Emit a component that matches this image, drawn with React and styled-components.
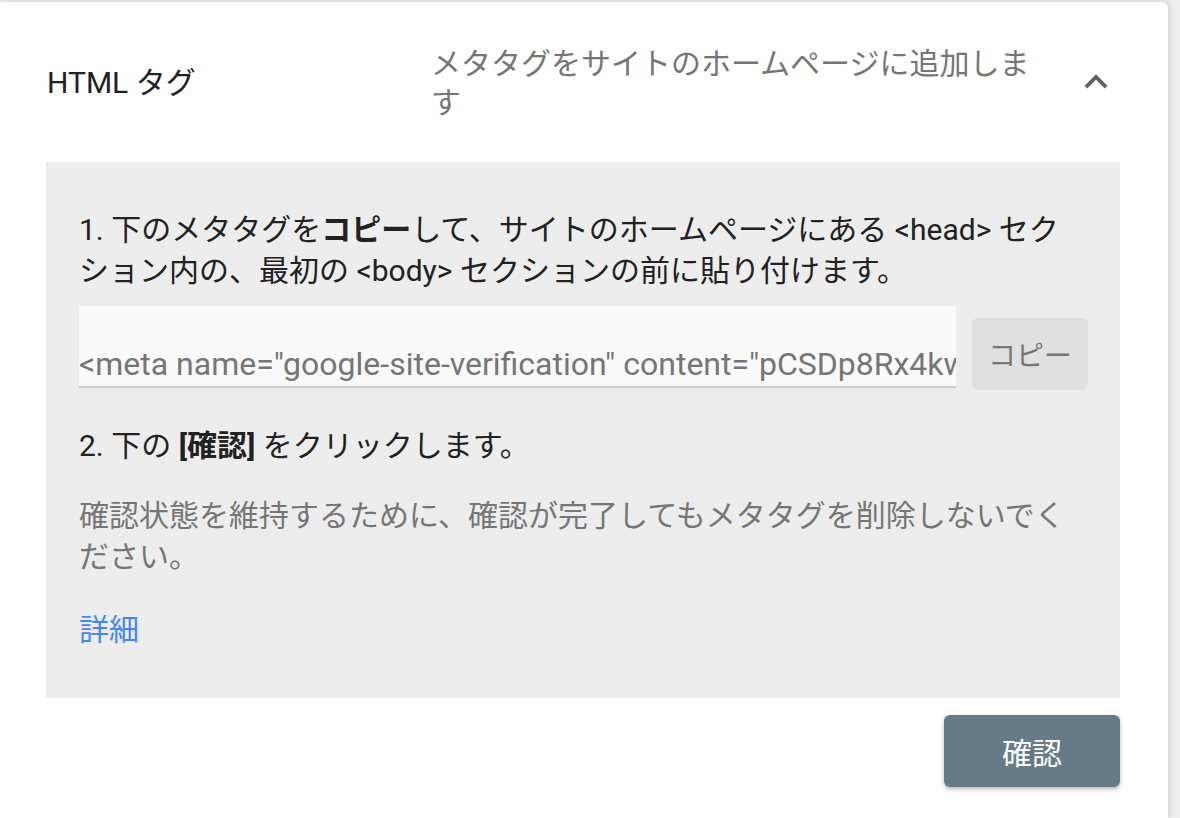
import React from "react";
import styled, { createGlobalStyle } from "styled-components";

const GlobalStyle = createGlobalStyle`
  body {
    margin: 0;
    background: #eeeeee;
    font-family: Roboto, "Noto Sans CJK JP", sans-serif;
  }
`;

const Page = styled.div`
  padding-top: 2px;
  height: 816px;
  overflow: hidden;
`;

const Card = styled.div`
  width: 1168px;
  min-height: 816px;
  background: #fff;
  border-radius: 0 6px 0 0;
  box-shadow: 1px 0 6px rgba(0, 0, 0, 0.14);
`;

const Header = styled.div`
  display: flex;
  align-items: center;
  min-height: 160px;
  padding: 0 49px 0 47px;
`;

const Label = styled.div`
  width: 384px;
  font-size: 30px;
  line-height: 41px;
  color: #212121;
`;

const Description = styled.div`
  width: 615px;
  padding-top: 2px;
  font-size: 30px;
  line-height: 39px;
  color: #757575;
`;

const Toggle = styled.button`
  margin-left: auto;
  width: 46px;
  height: 46px;
  padding: 0;
  border: none;
  background: none;
  color: #616161;
  display: flex;
`;

const Panel = styled.div`
  margin: 0 48px 0 46px;
  padding: 47px 32px 48px 33px;
  background: #ededed;
  font-size: 30px;
  line-height: 41px;
  color: #212121;
`;

const Step = styled.p`
  margin: ${(p) => p.$top || 0}px 0 0;
  max-width: 988px;
  color: ${(p) => (p.$muted ? "#757575" : "#212121")};
`;

const CopyRow = styled.div`
  display: flex;
  align-items: flex-end;
  gap: 16px;
  margin-top: 15px;
`;

const CodeField = styled.div`
  width: 877px;
  height: 82px;
  box-sizing: border-box;
  display: flex;
  align-items: flex-end;
  background: #f9f9f9;
  border-bottom: 2px solid #cccccc;
  overflow: hidden;
  white-space: nowrap;
  font-size: 32px;
  line-height: 43px;
  color: #757575;
`;

const CopyButton = styled.button`
  width: 116px;
  height: 72px;
  margin-bottom: -2px;
  border: none;
  border-radius: 6px;
  background: #e0e0e0;
  color: #757575;
  font-family: inherit;
  font-size: 28px;
`;

const Link = styled.a`
  display: inline-block;
  margin-top: 32px;
  color: #4285f4;
  text-decoration: none;
`;

const Footer = styled.div`
  display: flex;
  justify-content: flex-end;
  margin: 17px 48px 0 0;
`;

const ConfirmButton = styled.button`
  width: 176px;
  height: 72px;
  border: none;
  border-radius: 6px;
  background: #667a87;
  color: #fff;
  font-family: inherit;
  font-size: 30px;
  box-shadow: 0 2px 4px rgba(0, 0, 0, 0.3);
`;

function ChevronUp() {
  return (
    <svg width="46" height="46" viewBox="0 0 24 24" fill="currentColor">
      <path d="M12 8l-6 6 1.41 1.41L12 10.83l4.59 4.58L18 14z" />
    </svg>
  );
}

export default function App() {
  return (
    <>
      <GlobalStyle />
      <Page>
        <Card>
          <Header>
            <Label>HTML タグ</Label>
            <Description>メタタグをサイトのホームページに追加します</Description>
            <Toggle type="button" aria-label="閉じる">
              <ChevronUp />
            </Toggle>
          </Header>
          <Panel>
            <Step>
              1. 下のメタタグを<b>コピー</b>して、サイトのホームページにある
              &lt;head&gt; セクション内の、最初の &lt;body&gt;
              セクションの前に貼り付けます。
            </Step>
            <CopyRow>
              <CodeField>
                &lt;meta name="google-site-verification"
                content="pCSDp8Rx4kwL2qP0a9sYvHdZ3mTnE7uJcFgBiK1oW6Q" /&gt;
              </CodeField>
              <CopyButton type="button">コピー</CopyButton>
            </CopyRow>
            <Step $top={37}>
              2. 下の <b>[確認]</b> をクリックします。
            </Step>
            <Step $top={29} $muted>
              確認状態を維持するために、確認が完了してもメタタグを削除しないでください。
            </Step>
            <Link href="#">詳細</Link>
          </Panel>
          <Footer>
            <ConfirmButton type="button">確認</ConfirmButton>
          </Footer>
        </Card>
      </Page>
    </>
  );
}
